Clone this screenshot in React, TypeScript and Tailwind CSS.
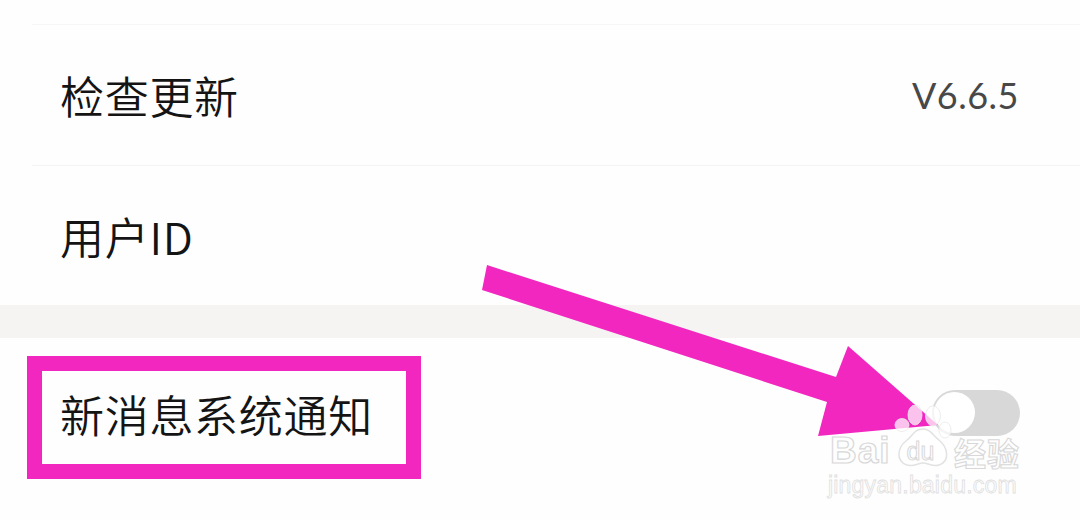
const cjk = "font-['Noto_Sans_CJK_SC','Noto_Sans',sans-serif]"

function Row({ label, value, className }: { label: string; value?: string; className: string }) {
  return (
    <div className={`ml-8 flex items-center justify-between pl-7 pr-[61px] ${className}`}>
      <span className={`${cjk} text-[44px] font-[350] leading-none tracking-[0.7px] text-[#141414]`}>{label}</span>
      {value && <span className="font-['Lato',sans-serif] text-[36px] leading-none tracking-[0.5px] text-[#484848]">{value}</span>}
    </div>
  )
}

function Arrow() {
  return (
    <svg className="absolute left-0 top-0" width="1080" height="520" viewBox="0 0 1080 520">
      <polygon
        fill="#f227c0"
        points="487,265 836,377 848,346 938,425 818,436 827,402 482,290"
      />
    </svg>
  )
}

function Paw() {
  return (
    <div className="relative flex h-[64px] w-[64px] items-end justify-center pb-[5px] pr-[3px]">
      <svg className="absolute inset-0" width="64" height="64" viewBox="0 0 64 64">
        <g fill="#ffffff" fillOpacity="0.72" stroke="#e8e8e8" strokeOpacity="0.8" strokeWidth="1">
          <ellipse cx="12" cy="20" rx="7" ry="6.5" />
          <ellipse cx="25" cy="10" rx="7" ry="10" />
          <ellipse cx="43" cy="11" rx="7.5" ry="10" />
          <ellipse cx="55" cy="25" rx="6" ry="8" />
        </g>
        <path
          d="M33 24C24 24 23 31 16 36 8 42 5 56 17 60 24 62 28 58 33 58 38 58 43 62 49 60 61 56 57 42 50 36 43 31 41 24 33 24Z"
          fill="#ffffff"
          stroke="#e2e2e2"
          strokeWidth="1.5"
        />
      </svg>
      <span className="relative font-['Liberation_Sans',sans-serif] text-[25px] leading-none text-transparent [-webkit-text-stroke:1px_#d8d8d8]">
        du
      </span>
    </div>
  )
}

function Watermark() {
  return (
    <div className="absolute left-[828px] top-[405px] flex w-[200px] flex-col">
      <div className="flex items-end">
        <span className="w-[62px] pl-[2px] font-['Liberation_Sans',sans-serif] text-[37px] font-bold leading-none tracking-[1px] text-transparent [-webkit-text-stroke:1.2px_#d8d8d8]">
          Bai
        </span>
        <Paw />
        <span className={`${cjk} pb-[1px] text-[32px] font-bold leading-none tracking-[1px] text-transparent [-webkit-text-stroke:1.1px_#d8d8d8]`}>
          经验
        </span>
      </div>
      <span className="mt-[5px] whitespace-nowrap font-['Liberation_Sans',sans-serif] text-[23px] leading-none tracking-[0.2px] text-transparent [-webkit-text-stroke:0.8px_#e0e0e0]">
        jingyan.baidu.com
      </span>
    </div>
  )
}

export default function App() {
  return (
    <div className="relative h-[520px] w-[1080px] overflow-hidden bg-[#fefefe]">
      <div className="ml-8 h-[25px] border-b border-[#f6f6f6]" />
      <Row label="检查更新" value="V6.6.5" className="h-[141px] border-b border-[#f4f4f4]" />
      <Row label="用户ID" className="h-[139px]" />
      <div className="h-[33px] bg-[#f5f4f3]" />

      {/* notification row */}
      <div className="flex h-[155px] items-center justify-between pb-[4px] pl-[60px] pr-[60px]">
        <span className={`${cjk} text-[44px] font-[350] leading-none tracking-[0.7px] text-[#141414]`}>新消息系统通知</span>
        <div className="mb-[2px] flex h-[46px] w-[88px] items-center rounded-full bg-[#d8d8d8] p-[2px]">
          <div className="h-[41px] w-[41px] rounded-full bg-white" />
        </div>
      </div>

      {/* annotations */}
      <div className="absolute left-[27px] top-[356px] h-[123px] w-[394px] border-[15px] border-[#f227c0]" />
      <Arrow />
      <Watermark />
    </div>
  )
}
